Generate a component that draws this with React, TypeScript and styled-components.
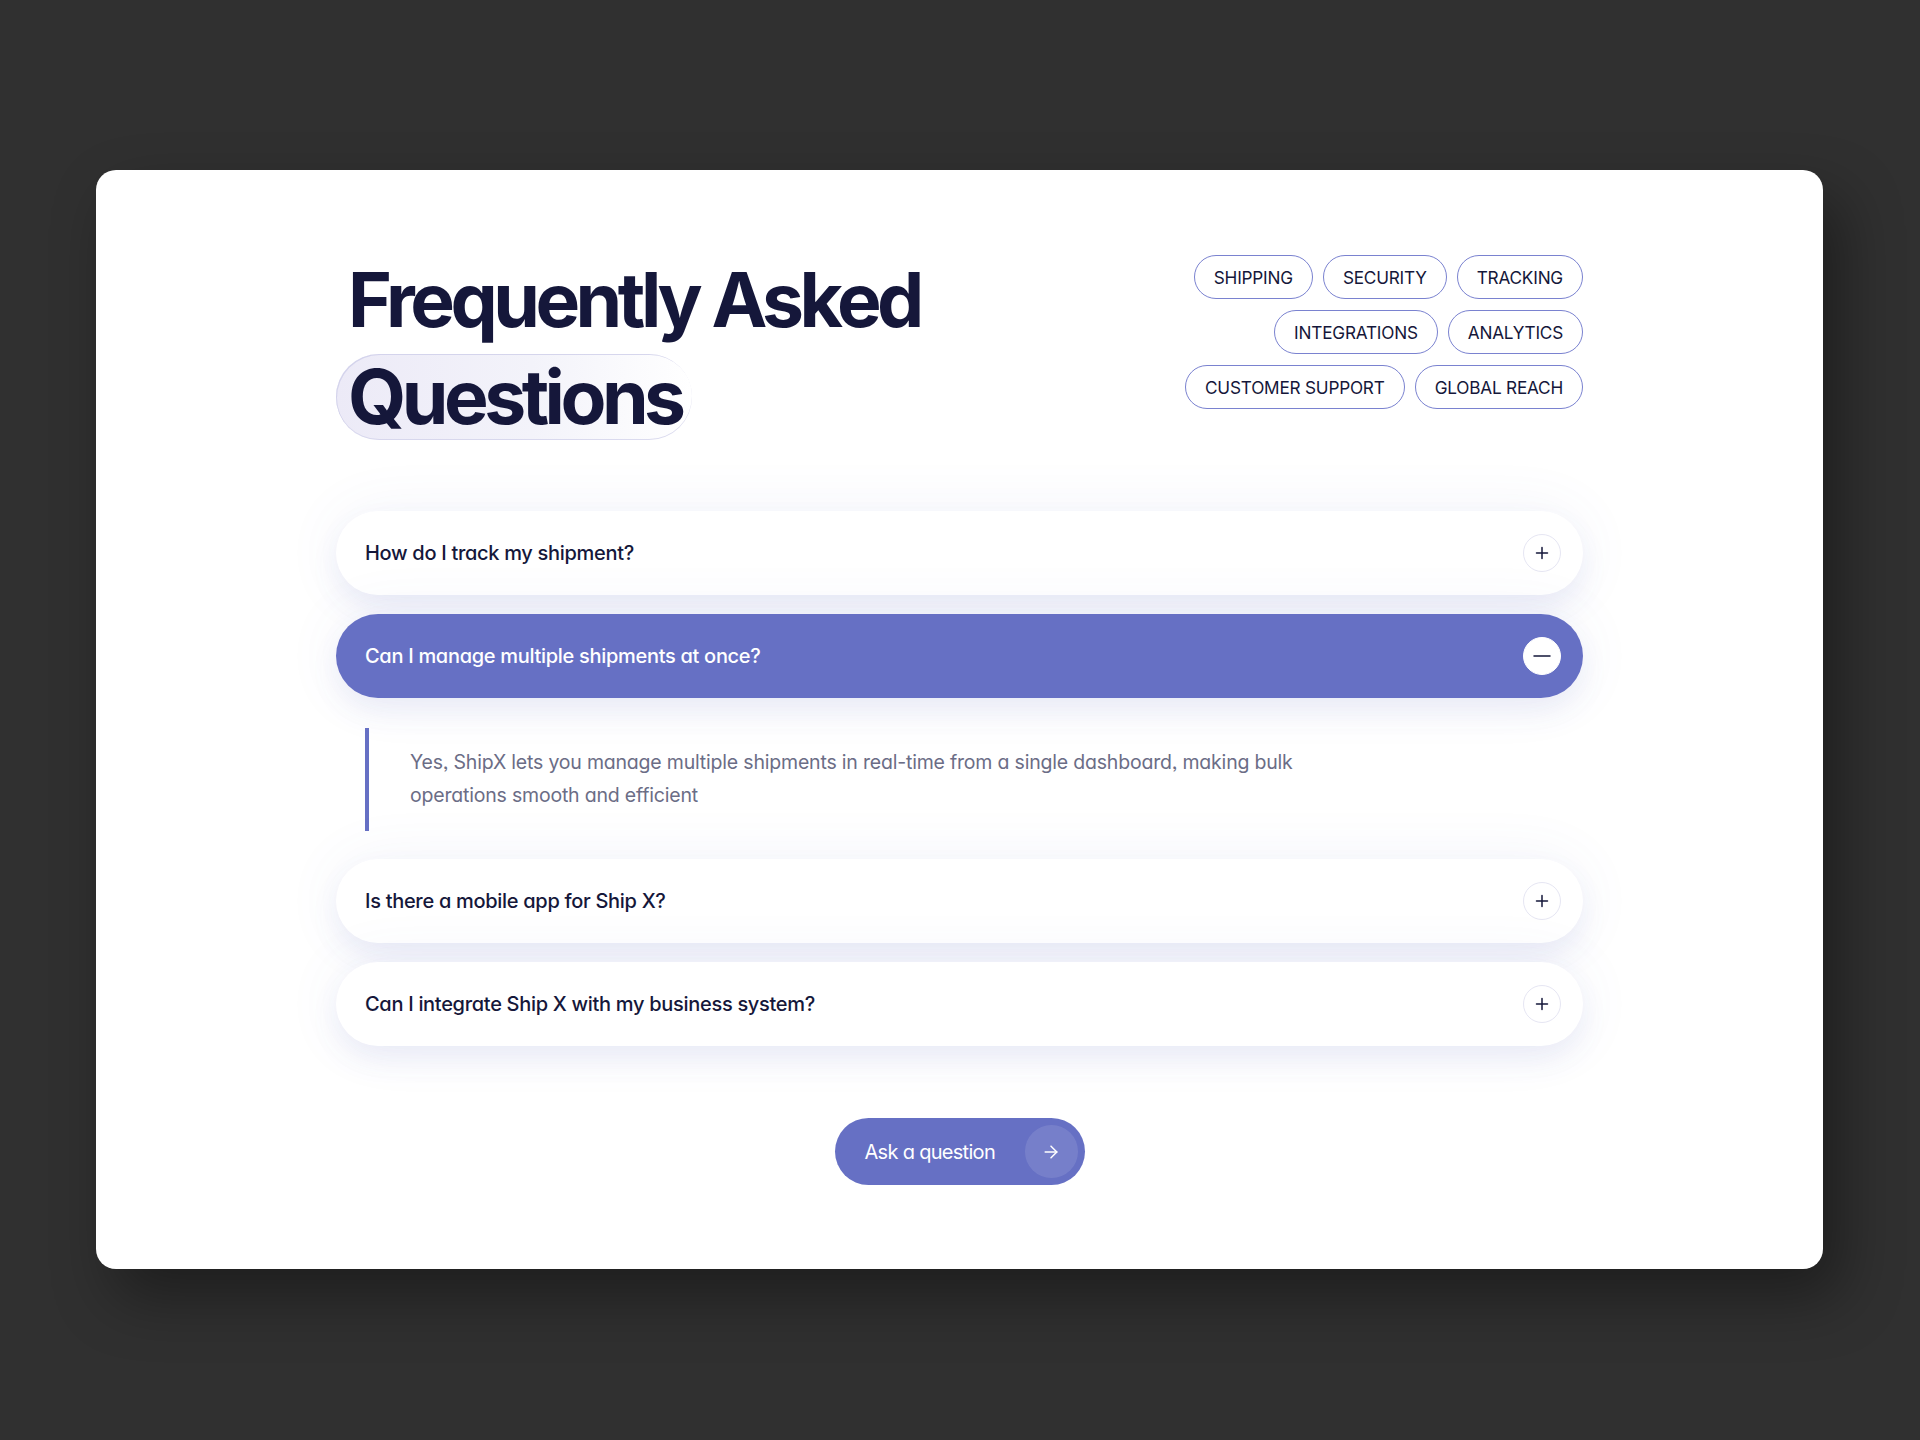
import React, { useState } from "react";
import styled, { createGlobalStyle } from "styled-components";
import { ArrowRight } from "lucide-react";

const GlobalStyle = createGlobalStyle`
  html, body {
    margin: 0;
    padding: 0;
    background: #303030;
  }
  body {
    font-family: Inter, "Noto Sans", "Liberation Sans", sans-serif;
    font-feature-settings: "cv11" 1, "ss03" 1;
    -webkit-font-smoothing: antialiased;
  }
  * { box-sizing: border-box; }
`;

const PRIMARY = "#6670c4";
const INK = "#15173a";

const Page = styled.div`
  min-height: 1440px;
  padding: 170px 0 0 96px;
`;

const Card = styled.section`
  width: 1727px;
  background: #ffffff;
  border-radius: 20px;
  box-shadow: 18px 28px 60px rgba(0, 0, 0, 0.38);
  padding: 82px 240px 84px;
  display: flex;
  flex-direction: column;
`;

const Header = styled.header`
  display: flex;
  justify-content: space-between;
  align-items: flex-start;
`;

const Title = styled.h1`
  margin: 0;
  display: flex;
  flex-direction: column;
  align-items: flex-start;
  padding-left: 12px;
  font-size: 75px;
  font-weight: 700;
  letter-spacing: -0.06em;
  color: ${INK};
`;

const TitleLine = styled.span`
  display: block;
  line-height: 96px;
  height: 96px;
`;

const Highlight = styled.span`
  display: block;
  height: 86px;
  line-height: 86px;
  margin: 6px 0 0 -12px;
  padding: 0 10px 0 12px;
  border-radius: 43px;
  background: linear-gradient(90deg, #eceaf7 0%, #f3f3fa 55%, #ffffff 100%);
  box-shadow: inset 1px 1px 0 rgba(205, 205, 232, 0.8), inset 0 -1px 0 rgba(205, 205, 232, 0.7);
`;

const Tags = styled.div`
  margin-top: 3px;
  display: flex;
  flex-direction: column;
  align-items: flex-end;
  gap: 11px;
`;

const TagRow = styled.div`
  display: flex;
  gap: 10px;
`;

const Tag = styled.button`
  height: 44px;
  padding: 0 19px;
  border-radius: 22px;
  border: 1.5px solid #7a82d0;
  background: #ffffff;
  color: ${INK};
  font-family: inherit;
  font-feature-settings: inherit;
  font-size: 17.2px;
  font-weight: 400;
  letter-spacing: -0.012em;
  text-transform: uppercase;
  cursor: pointer;
`;

const List = styled.div`
  margin-top: 71px;
  display: flex;
  flex-direction: column;
  gap: 19px;
`;

const Item = styled.div`
  display: flex;
  flex-direction: column;
`;

const Question = styled.button<{ $open: boolean }>`
  height: 84px;
  width: 100%;
  border: none;
  border-radius: 42px;
  padding: 0 22px 0 29px;
  display: flex;
  align-items: center;
  justify-content: space-between;
  background: ${(p) => (p.$open ? PRIMARY : "#ffffff")};
  color: ${(p) => (p.$open ? "#ffffff" : INK)};
  box-shadow: 0 14px 28px rgba(92, 96, 190, 0.09), 0 0 60px rgba(92, 96, 190, 0.07);
  font-family: inherit;
  font-feature-settings: inherit;
  font-size: 20px;
  font-weight: 500;
  letter-spacing: -0.015em;
  text-align: left;
  cursor: pointer;
`;

const Toggle = styled.span<{ $open: boolean }>`
  width: 38px;
  height: 38px;
  flex: none;
  border-radius: 50%;
  display: flex;
  align-items: center;
  justify-content: center;
  background: #ffffff;
  border: 1px solid ${(p) => (p.$open ? "#ffffff" : "#e6e6f3")};
`;

const Answer = styled.div`
  padding: 30px 0 9px 29px;
`;

const AnswerBody = styled.p`
  margin: 0;
  border-left: 4px solid ${PRIMARY};
  padding: 18px 0 19px 41px;
  max-width: 940px;
  font-size: 19.5px;
  line-height: 33px;
  font-weight: 400;
  letter-spacing: -0.01em;
  color: #6b6d86;
`;

const Footer = styled.div`
  margin-top: 72px;
  display: flex;
  justify-content: center;
`;

const AskButton = styled.button`
  width: 250px;
  height: 67px;
  border: none;
  border-radius: 34px;
  background: ${PRIMARY};
  color: #ffffff;
  padding: 0 7px 0 30px;
  display: flex;
  align-items: center;
  justify-content: space-between;
  font-family: inherit;
  font-feature-settings: inherit;
  font-size: 20px;
  font-weight: 400;
  letter-spacing: -0.035em;
  cursor: pointer;
`;

const ArrowDisc = styled.span`
  width: 53px;
  height: 53px;
  border-radius: 50%;
  background: rgba(255, 255, 255, 0.11);
  display: flex;
  align-items: center;
  justify-content: center;
`;

const PlusIcon = () => (
  <svg width="14" height="14" viewBox="0 0 14 14" fill="none">
    <path d="M7 1.5v11M1.5 7h11" stroke={INK} strokeWidth="1.5" strokeLinecap="round" />
  </svg>
);

const MinusIcon = () => (
  <svg width="18" height="4" viewBox="0 0 18 4" fill="none">
    <path d="M1 2h16" stroke={INK} strokeWidth="1.5" strokeLinecap="round" />
  </svg>
);

const tagRows = [
  ["Shipping", "Security", "Tracking"],
  ["Integrations", "Analytics"],
  ["Customer Support", "Global Reach"],
];

const faqs = [
  {
    q: "How do I track my shipment?",
    a: "Enter your tracking number on the ShipX dashboard to follow your parcel at every step of its journey.",
  },
  {
    q: "Can I manage multiple shipments at once?",
    a: "Yes, ShipX lets you manage multiple shipments in real-time from a single dashboard, making bulk operations smooth and efficient",
  },
  {
    q: "Is there a mobile app for Ship X?",
    a: "Ship X is available for iOS and Android, so your shipments are always within reach.",
  },
  {
    q: "Can I integrate Ship X with my business system?",
    a: "Ship X connects to popular ERP, e-commerce and accounting tools through ready-made integrations and an open API.",
  },
];

export default function App() {
  const [open, setOpen] = useState<number | null>(1);

  return (
    <>
      <GlobalStyle />
      <Page>
        <Card>
          <Header>
            <Title>
              <TitleLine>Frequently Asked</TitleLine>
              <Highlight>Questions</Highlight>
            </Title>
            <Tags>
              {tagRows.map((row, i) => (
                <TagRow key={i}>
                  {row.map((t) => (
                    <Tag key={t}>{t}</Tag>
                  ))}
                </TagRow>
              ))}
            </Tags>
          </Header>

          <List>
            {faqs.map((f, i) => {
              const isOpen = open === i;
              return (
                <Item key={f.q}>
                  <Question $open={isOpen} onClick={() => setOpen(isOpen ? null : i)}>
                    <span>{f.q}</span>
                    <Toggle $open={isOpen}>{isOpen ? <MinusIcon /> : <PlusIcon />}</Toggle>
                  </Question>
                  {isOpen && (
                    <Answer>
                      <AnswerBody>{f.a}</AnswerBody>
                    </Answer>
                  )}
                </Item>
              );
            })}
          </List>

          <Footer>
            <AskButton>
              <span>Ask a question</span>
              <ArrowDisc>
                <ArrowRight size={20} strokeWidth={1.8} color="#ffffff" />
              </ArrowDisc>
            </AskButton>
          </Footer>
        </Card>
      </Page>
    </>
  );
}
